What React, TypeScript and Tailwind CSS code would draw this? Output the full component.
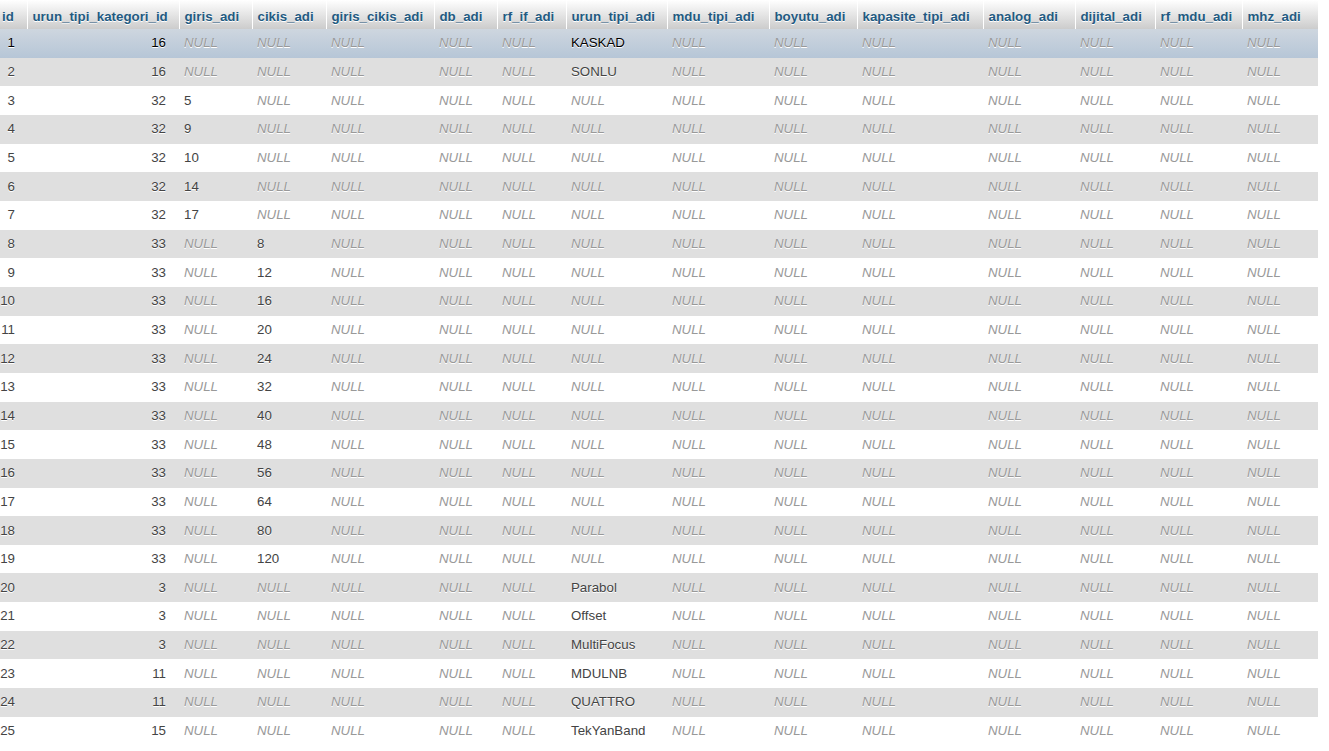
const columns = [
  { key: "id", width: 27 },
  { key: "urun_tipi_kategori_id", width: 152 },
  { key: "giris_adi", width: 73 },
  { key: "cikis_adi", width: 74 },
  { key: "giris_cikis_adi", width: 108 },
  { key: "db_adi", width: 63 },
  { key: "rf_if_adi", width: 69 },
  { key: "urun_tipi_adi", width: 101 },
  { key: "mdu_tipi_adi", width: 102 },
  { key: "boyutu_adi", width: 88 },
  { key: "kapasite_tipi_adi", width: 126 },
  { key: "analog_adi", width: 92 },
  { key: "dijital_adi", width: 80 },
  { key: "rf_mdu_adi", width: 87 },
  { key: "mhz_adi", width: 76 },
]

type Row = [number, number, string | null, string | null, string | null]

// id, kategori, giris, cikis, urun_tipi
const rows: Row[] = [
  [1, 16, null, null, "KASKAD"],
  [2, 16, null, null, "SONLU"],
  [3, 32, "5", null, null],
  [4, 32, "9", null, null],
  [5, 32, "10", null, null],
  [6, 32, "14", null, null],
  [7, 32, "17", null, null],
  [8, 33, null, "8", null],
  [9, 33, null, "12", null],
  [10, 33, null, "16", null],
  [11, 33, null, "20", null],
  [12, 33, null, "24", null],
  [13, 33, null, "32", null],
  [14, 33, null, "40", null],
  [15, 33, null, "48", null],
  [16, 33, null, "56", null],
  [17, 33, null, "64", null],
  [18, 33, null, "80", null],
  [19, 33, null, "120", null],
  [20, 3, null, null, "Parabol"],
  [21, 3, null, null, "Offset"],
  [22, 3, null, null, "MultiFocus"],
  [23, 11, null, null, "MDULNB"],
  [24, 11, null, null, "QUATTRO"],
  [25, 15, null, null, "TekYanBand"],
]

function Cell({ value }: { value: string | null }) {
  if (value === null) {
    return <td className="pl-[5px] italic text-[#999]">NULL</td>
  }
  return <td className="pl-[5px]">{value}</td>
}

export default function App() {
  return (
    <div className="w-[1329px] h-[751px] overflow-hidden bg-white font-['Liberation_Sans',Arial,sans-serif] text-[13.3px] text-[#444] [text-shadow:0_1px_0_#fff]">
      <table className="table-fixed border-collapse w-[1318px]">
        <colgroup>
          {columns.map(c => (
            <col key={c.key} style={{ width: c.width }} />
          ))}
        </colgroup>
        <thead>
          <tr className="h-[29px] bg-gradient-to-b from-white to-[#cccccc]">
            {columns.map((c, i) => (
              <th
                key={c.key}
                className={`text-left font-bold text-[#235a81] whitespace-nowrap pt-[5px] ${i === 0 ? "pl-[2px]" : "pl-[5px] border-l border-white"}`}
              >
                {c.key}
              </th>
            ))}
          </tr>
        </thead>
        <tbody>
          {rows.map((r, idx) => {
            const bg =
              idx === 0
                ? "bg-gradient-to-b from-[#ced6df] to-[#b6c6d7] text-black"
                : idx % 2 === 1
                ? "bg-[#dfdfdf]"
                : "bg-white"
            return (
              <tr key={r[0]} className={`h-[28.67px] ${bg}`}>
                <td className="text-right pr-[12px]">{r[0]}</td>
                <td className="text-right pr-[13px]">{r[1]}</td>
                <Cell value={r[2]} />
                <Cell value={r[3]} />
                <Cell value={null} />
                <Cell value={null} />
                <Cell value={null} />
                <Cell value={r[4]} />
                <Cell value={null} />
                <Cell value={null} />
                <Cell value={null} />
                <Cell value={null} />
                <Cell value={null} />
                <Cell value={null} />
                <Cell value={null} />
              </tr>
            )
          })}
        </tbody>
      </table>
    </div>
  )
}
